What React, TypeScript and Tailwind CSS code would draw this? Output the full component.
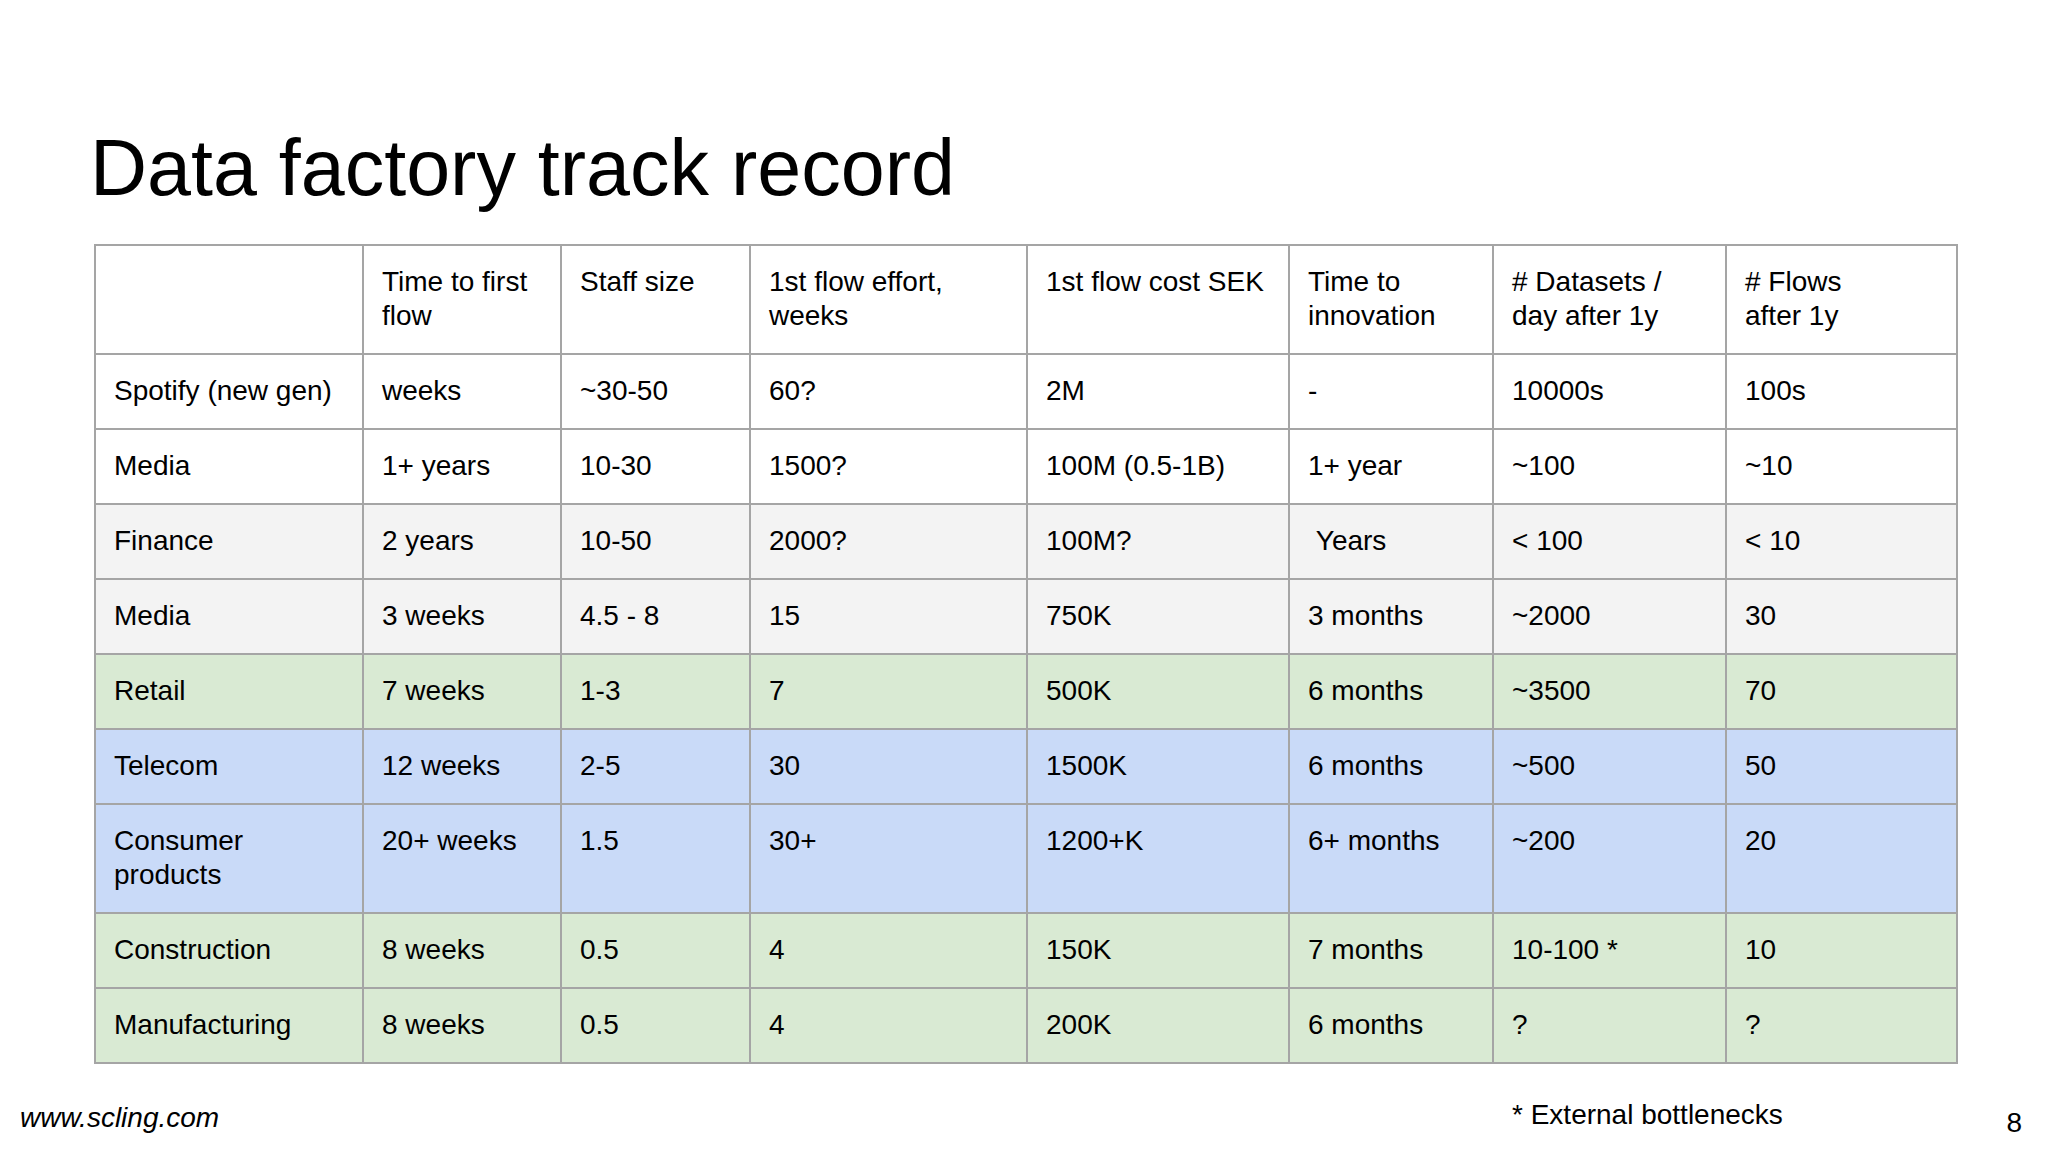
import React from "react";

type Row = { cells: string[]; bg: string };

const header = [
  "",
  "Time to first flow",
  "Staff size",
  "1st flow effort, weeks",
  "1st flow cost SEK",
  "Time to innovation",
  "# Datasets / day after 1y",
  "# Flows\nafter 1y",
];

const rows: Row[] = [
  { bg: "bg-white", cells: ["Spotify (new gen)", "weeks", "~30-50", "60?", "2M", "-", "10000s", "100s"] },
  { bg: "bg-white", cells: ["Media", "1+ years", "10-30", "1500?", "100M (0.5-1B)", "1+ year", "~100", "~10"] },
  { bg: "bg-[#f3f3f3]", cells: ["Finance", "2 years", "10-50", "2000?", "100M?", "\u00a0Years", "< 100", "< 10"] },
  { bg: "bg-[#f3f3f3]", cells: ["Media", "3 weeks", "4.5 - 8", "15", "750K", "3 months", "~2000", "30"] },
  { bg: "bg-[#d9ead3]", cells: ["Retail", "7 weeks", "1-3", "7", "500K", "6 months", "~3500", "70"] },
  { bg: "bg-[#c9daf8]", cells: ["Telecom", "12 weeks", "2-5", "30", "1500K", "6 months", "~500", "50"] },
  { bg: "bg-[#c9daf8]", cells: ["Consumer products", "20+ weeks", "1.5", "30+", "1200+K", "6+ months", "~200", "20"] },
  { bg: "bg-[#d9ead3]", cells: ["Construction", "8 weeks", "0.5", "4", "150K", "7 months", "10-100 *", "10"] },
  { bg: "bg-[#d9ead3]", cells: ["Manufacturing", "8 weeks", "0.5", "4", "200K", "6 months", "?", "?"] },
];

function Cell({ text, bg }: { text: string; bg: string }) {
  return (
    <div className={`${bg} px-[18px] pt-[19px] pb-[20px] text-[28px] leading-[34px] whitespace-pre-wrap`}>
      {text}
    </div>
  );
}

export default function App() {
  return (
    <div className="w-[2048px] h-[1152px] bg-white text-black font-['Liberation_Sans',Arial,sans-serif] overflow-hidden">
      <h1 className="pl-[90px] pt-[128px] text-[79px] leading-[79px] font-normal">Data factory track record</h1>

      <div className="ml-[94px] mt-[37px] w-[1864px] grid grid-cols-[266px_196px_187px_275px_260px_202px_231px_229px] gap-[2px] p-[2px] bg-[#a5a5a5]">
        {header.map((h, i) => (
          <Cell key={`h${i}`} text={h} bg="bg-white" />
        ))}
        {rows.map((r, ri) =>
          r.cells.map((c, ci) => <Cell key={`${ri}-${ci}`} text={c} bg={r.bg} />)
        )}
      </div>

      <div className="flex items-start mt-[38px]">
        <div className="w-[1512px] pl-[20px] text-[28px] leading-[32px] italic">www.scling.com</div>
        <div className="-mt-[3px] text-[28px] leading-[32px]">* External bottlenecks</div>
        <div className="ml-auto mr-[26px] mt-[5px] text-[28px] leading-[32px]">8</div>
      </div>
    </div>
  );
}
